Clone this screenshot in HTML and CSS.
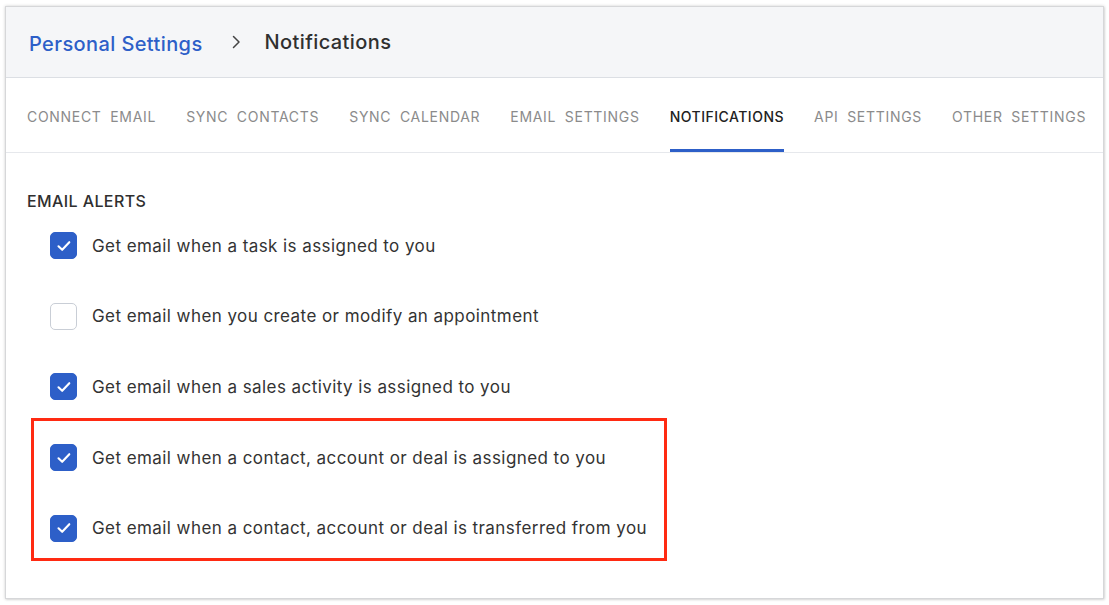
FILE: index.html
```html
<!DOCTYPE html>
<html lang="en">
<head>
<meta charset="utf-8">
<title>Notifications</title>
<link rel="stylesheet" href="styles.css">
</head>
<body>
<div class="card">
  <header class="crumbs">
    <a class="crumb-link">Personal Settings</a>
    <svg class="chev" width="10" height="14" viewBox="0 0 10 14"><path d="M2.5 1.5 L8 7 L2.5 12.5" fill="none" stroke="#444" stroke-width="1.5" stroke-linecap="round" stroke-linejoin="round"/></svg>
    <span class="crumb-current">Notifications</span>
  </header>
  <nav class="tabs">
    <span class="tab">Connect Email</span>
    <span class="tab">Sync Contacts</span>
    <span class="tab">Sync Calendar</span>
    <span class="tab">Email Settings</span>
    <span class="tab active">Notifications</span>
    <span class="tab">API Settings</span>
    <span class="tab">Other Settings</span>
  </nav>
  <section class="content">
    <h2 class="section-title">EMAIL ALERTS</h2>
    <div class="list">
      <label class="row"><span class="cb on"><svg width="20" height="20" viewBox="0 0 20 20"><path d="M4.5 10.3 L8.2 13.8 L15.3 6.2" fill="none" stroke="#fff" stroke-width="2.1" stroke-linecap="round" stroke-linejoin="round"/></svg></span><span class="txt">Get email when a task is assigned to you</span></label>
      <label class="row"><span class="cb"></span><span class="txt">Get email when you create or modify an appointment</span></label>
      <label class="row"><span class="cb on"><svg width="20" height="20" viewBox="0 0 20 20"><path d="M4.5 10.3 L8.2 13.8 L15.3 6.2" fill="none" stroke="#fff" stroke-width="2.1" stroke-linecap="round" stroke-linejoin="round"/></svg></span><span class="txt">Get email when a sales activity is assigned to you</span></label>
      <div class="highlight">
        <label class="row"><span class="cb on"><svg width="20" height="20" viewBox="0 0 20 20"><path d="M4.5 10.3 L8.2 13.8 L15.3 6.2" fill="none" stroke="#fff" stroke-width="2.1" stroke-linecap="round" stroke-linejoin="round"/></svg></span><span class="txt">Get email when a contact, account or deal is assigned to you</span></label>
        <label class="row"><span class="cb on"><svg width="20" height="20" viewBox="0 0 20 20"><path d="M4.5 10.3 L8.2 13.8 L15.3 6.2" fill="none" stroke="#fff" stroke-width="2.1" stroke-linecap="round" stroke-linejoin="round"/></svg></span><span class="txt">Get email when a contact, account or deal is transferred from you</span></label>
      </div>
    </div>
  </section>
</div>
</body>
</html>
```
FILE: styles.css
```css
* { box-sizing: border-box; }
html, body { margin: 0; padding: 0; background: #ffffff; }
body {
  font-family: Inter, "Noto Sans", "Liberation Sans", sans-serif;
  color: #333;
  padding: 6px 5px 6px 5px;
}
.card {
  width: 1099px;
  height: 593px;
  border: 1px solid #d6d7d9;
  box-shadow: 0 0 3px rgba(0,0,0,0.18), 1px 1px 2px rgba(0,0,0,0.08);
  background: #fff;
  overflow: hidden;
}
.crumbs {
  height: 71px;
  background: #f5f6f8;
  border-bottom: 1px solid #dcdfe4;
  display: flex;
  align-items: center;
  padding: 0 0 0 23px;
}
.crumb-link {
  color: #2d5fc8;
  font-size: 20px;
  font-weight: 500;
  letter-spacing: 0.4px;
  padding-top: 3px;
}
.chev { margin: 0 0 0 28px; }
.crumb-current {
  margin-left: 24px;
  font-size: 20px;
  font-weight: 500;
  letter-spacing: 0.4px;
  color: #303030;
}
.tabs {
  height: 75px;
  border-bottom: 1px solid #e6e8ec;
  display: flex;
  align-items: stretch;
  gap: 30px;
  padding-left: 21px;
}
.tab {
  display: flex;
  align-items: center;
  text-transform: uppercase;
  font-size: 14px;
  letter-spacing: 0.7px;
  word-spacing: 4px;
  color: #8b8b8b;
  padding-top: 5px;
  border-bottom: 3px solid transparent;
}
.tab.active {
  color: #222;
  font-weight: 500;
  border-bottom-color: #2d5fc8;
  letter-spacing: 0.5px;
}
.content { padding: 38px 0 0 21px; }
.section-title {
  margin: 0;
  font-size: 16px;
  line-height: 20px;
  font-weight: 500;
  letter-spacing: 0.4px;
  color: #2f2f2f;
}
.list {
  display: flex;
  flex-direction: column;
  gap: 43.5px;
  margin-top: 21px;
  padding-left: 23px;
}
.row {
  display: flex;
  align-items: center;
  height: 27px;
  gap: 15px;
}
.cb {
  width: 27px;
  height: 27px;
  flex: none;
  border-radius: 5px;
  border: 1px solid #c9ced6;
  background: #fff;
  display: flex;
  align-items: center;
  justify-content: center;
}
.cb.on { background: #2d5fc8; border-color: #2d5fc8; }
.txt { font-size: 17px; letter-spacing: 0.43px; color: #333; }
.highlight {
  display: flex;
  flex-direction: column;
  gap: 43.5px;
  margin: -26px 0 0 -19px;
  width: 636px;
  border: 3px solid #ff2a12;
  padding: 23.5px 0 16.5px 16px;
}
```
